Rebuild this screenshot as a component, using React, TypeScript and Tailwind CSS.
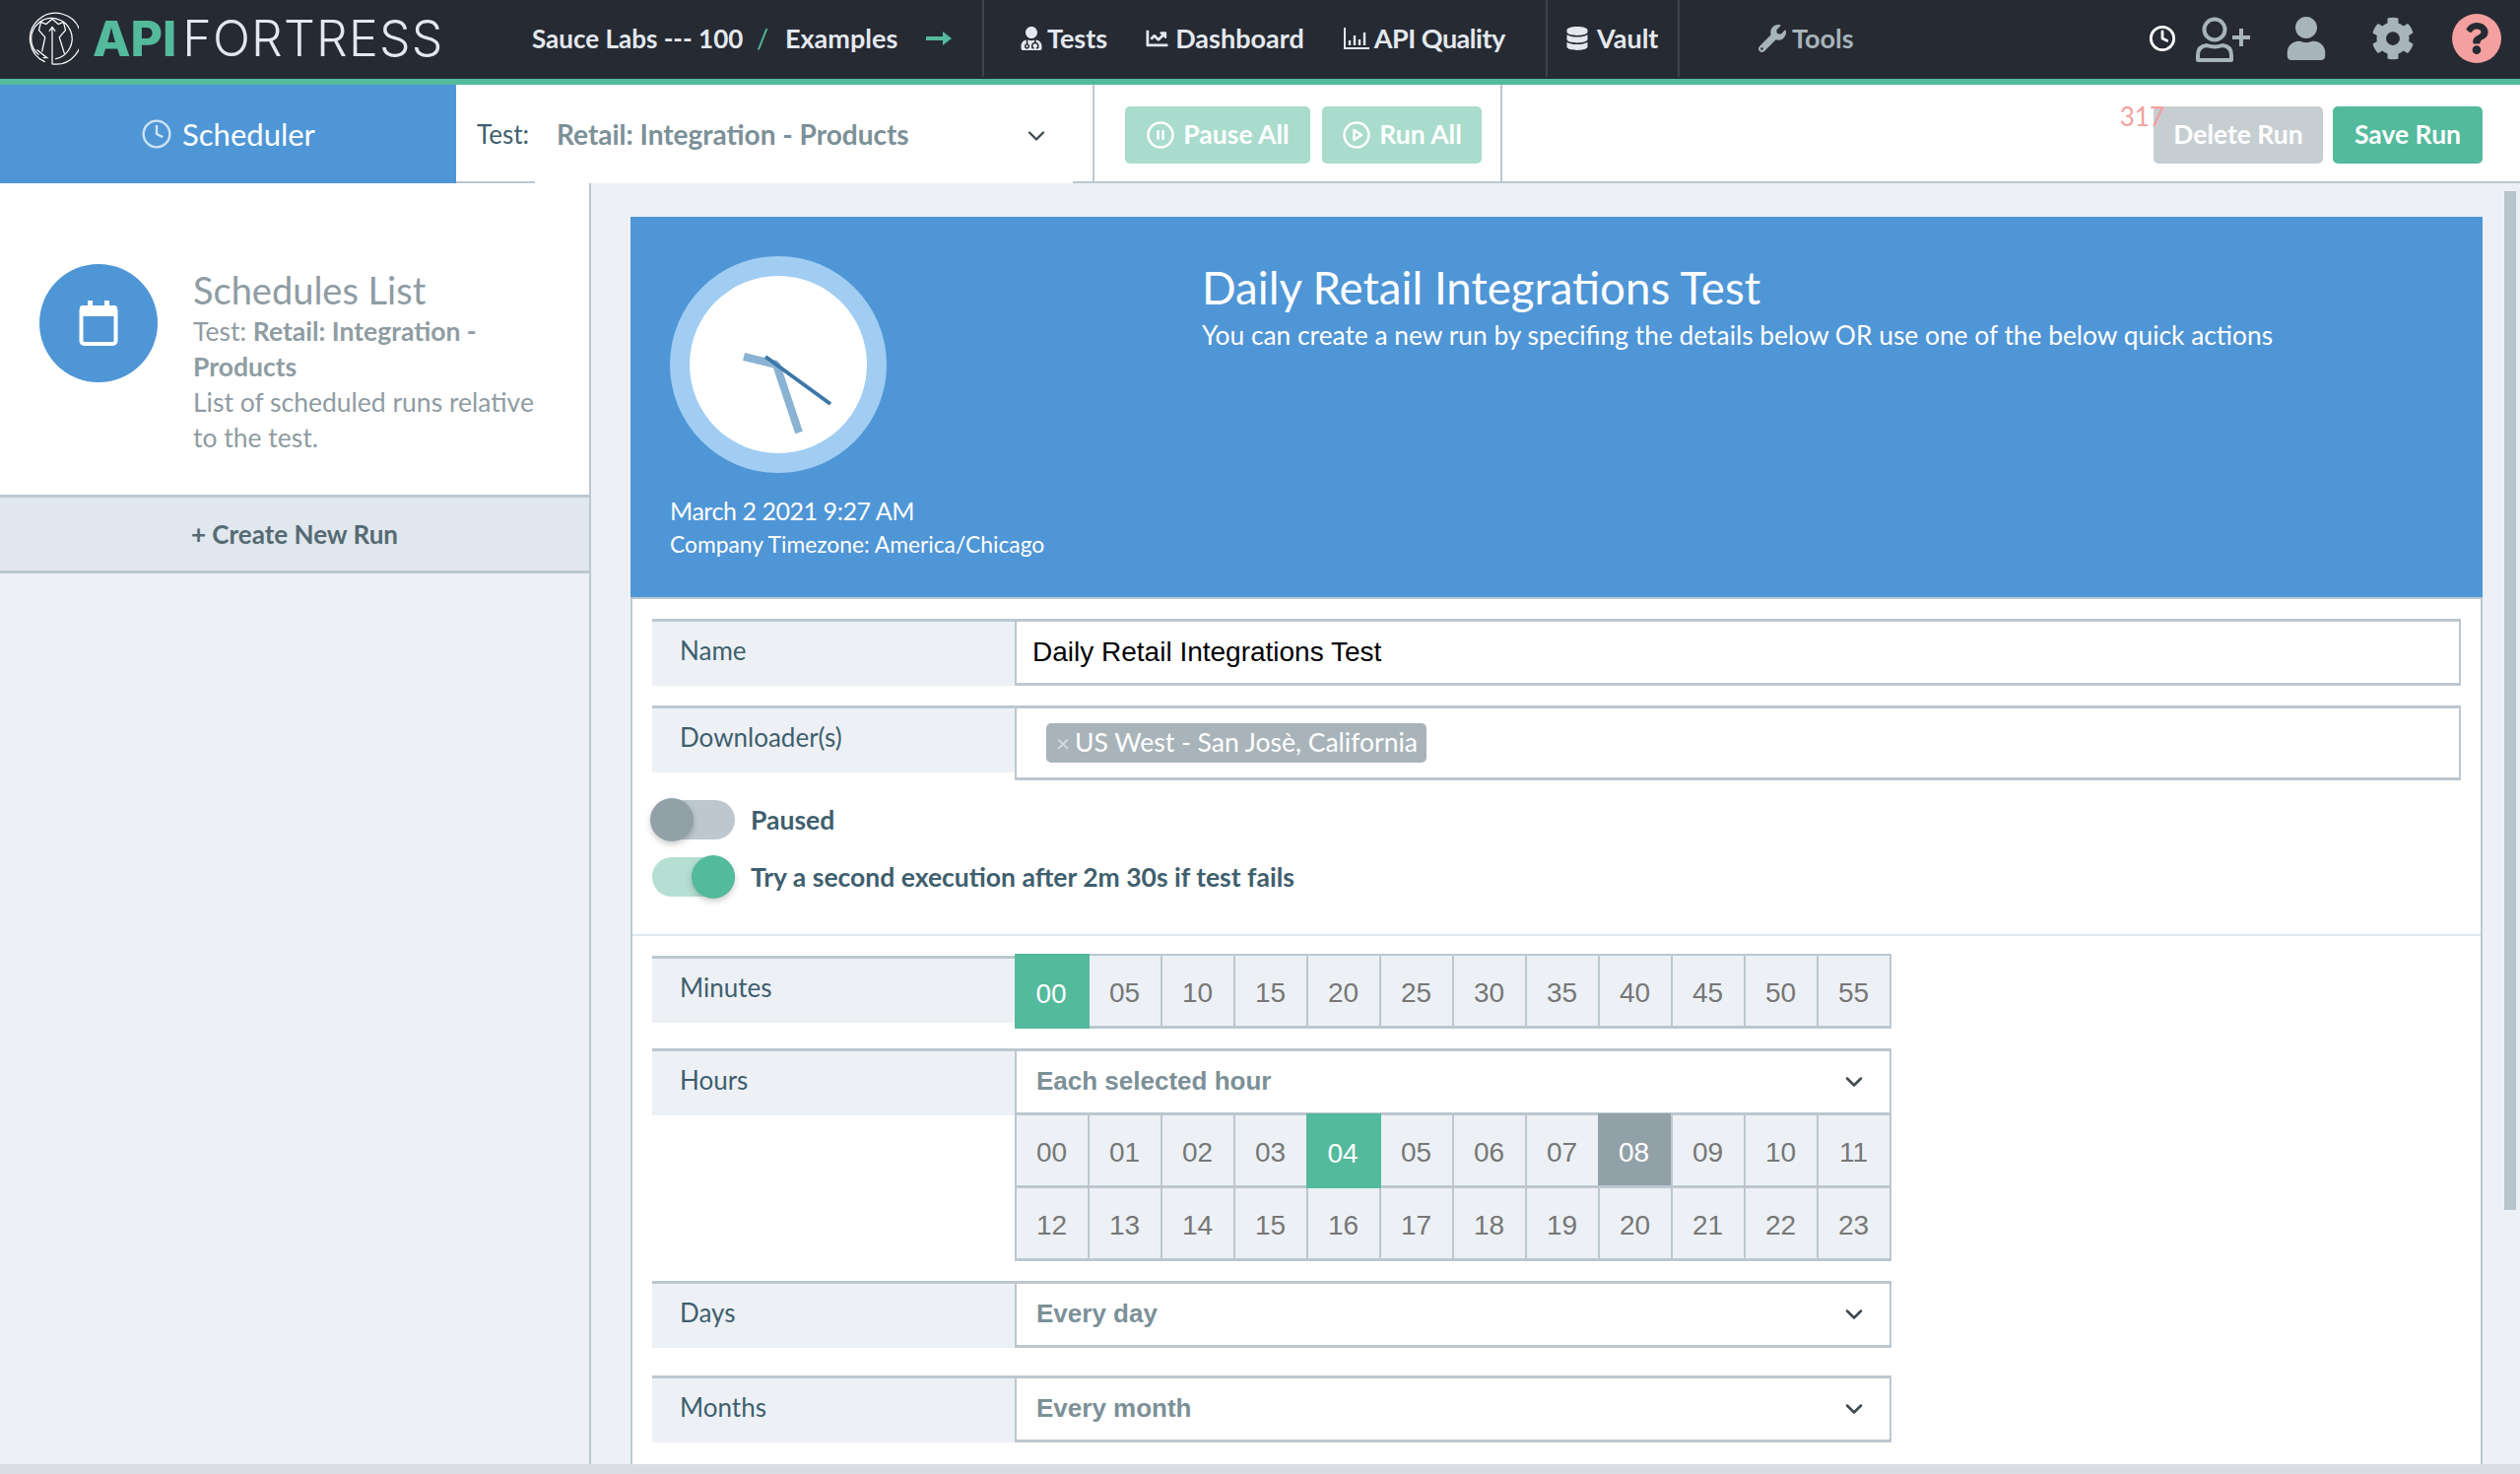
import { ChevronDown } from 'lucide-react';
import { FaChartLine, FaDatabase, FaUserMd, FaWrench, FaCog, FaQuestion, FaUser } from 'react-icons/fa';
import { FiClock, FiPauseCircle, FiPlayCircle } from 'react-icons/fi';

const SANS = 'font-[Lato,sans-serif]';

const minutes = ['00', '05', '10', '15', '20', '25', '30', '35', '40', '45', '50', '55'];
const hours = Array.from({ length: 24 }, (_, i) => String(i).padStart(2, '0'));

function Logo() {
  return (
    <svg viewBox="1 1 52 52" className="h-[54px] w-[54px] shrink-0 text-white" fill="none" stroke="currentColor" strokeWidth="1.2">
      <path d="M20 50 A25 25 0 1 1 27 52 L27 16" />
      <path d="M14 43 A20 20 0 1 1 30 47" />
      <path d="M24 20 L27 16 L30 20" />
      <path d="M17 40 L20 26 L14 19 L16 11 L21 13 L27 8 L33 13 L38 11 L40 19 L34 26 L39 42" />
      <path d="M12 38 L22 46 L18 46" />
    </svg>
  );
}

function NavLink({ icon, label, muted, gap = 'gap-[5px]', labelClass = '' }: { icon: React.ReactNode; label: string; muted?: boolean; gap?: string; labelClass?: string }) {
  return (
    <div className={`flex items-center text-[27px] font-bold ${gap} ${muted ? 'text-[#a7b4ba]' : 'text-[#e4e8ee]'}`}>
      {icon}
      <span className={labelClass}>{label}</span>
    </div>
  );
}

function Label({ children }: { children: React.ReactNode }) {
  return (
    <div className="flex h-[68px] w-[368px] shrink-0 items-start border-t-[3px] border-[#bcc7cf] bg-[#edf1f5] pl-7 pt-[14px] text-[26px] leading-[30px] text-[#3f5f6e]">
      {children}
    </div>
  );
}

function SelectBox({ value }: { value: string }) {
  return (
    <div className="flex h-[68px] items-center justify-between border-x-2 border-t-[3px] border-b-[3px] border-[#bcc7cf] bg-white pl-5 pr-[22px] font-['Liberation_Sans',sans-serif] text-[26px] font-bold text-[#7c9098]">
      <span className="-mt-[2px]">{value}</span>
      <ChevronDown className="h-7 w-7 text-[#3f4a50]" strokeWidth={2.2} />
    </div>
  );
}

function TimeCell({ value, tone }: { value: string; tone?: 'green' | 'gray' }) {
  if (tone === 'green') {
    return (
      <div className="relative -ml-[2px] -mt-[2px] flex h-[76px] items-center justify-center bg-[#53ba9c] pr-[2px] pt-[5px] text-white">
        {value}
      </div>
    );
  }
  const bg = tone === 'gray' ? 'relative -ml-[2px] -mt-[2px] pt-[7px] h-[76px] bg-[#92a1a8] text-white' : 'h-[74px] pt-[5px] bg-[#edf1f5] text-[#777]';
  return <div className={`flex items-center justify-center border-r-2 border-b-[3px] border-[#bcc7cf] pr-[1px] ${bg}`}>{value}</div>;
}

function Toggle({ on }: { on?: boolean }) {
  return (
    <div className={`relative h-10 w-[84px] shrink-0 rounded-full ${on ? 'bg-[#b5dfd2]' : 'bg-[#bcc7cf]'}`}>
      <div className={`absolute top-[-2px] h-11 w-11 rounded-full shadow-[0_3px_6px_rgba(0,0,0,0.2)] ${on ? 'right-0 bg-[#53ba9c]' : 'left-[-2px] bg-[#92a1a8]'}`} />
    </div>
  );
}

function ActionButton({ icon, label, className }: { icon?: React.ReactNode; label: string; className: string }) {
  return (
    <div className={`flex h-[58px] items-center justify-center gap-2 rounded-[5px] text-[26.5px] font-bold text-white ${className}`}>
      {icon}
      {label}
    </div>
  );
}

export default function App() {
  return (
    <div className={`flex h-[1496px] w-[2558px] flex-col overflow-hidden bg-[#edf1f5] ${SANS}`}>
      {/* top nav */}
      <header className="flex h-[86px] shrink-0 items-start border-b-[6px] border-[#53ba9c] bg-[#262a33]">
        <div className="flex h-[78px] w-[997px] items-center pl-[26px]">
          <Logo />
          <div className="ml-[14px] flex w-[355px] font-[Inter,sans-serif] text-[50px] leading-none">
            <span className="font-extrabold text-[#53ba9c]">API</span>
            <span className="ml-[6px] font-light tracking-[1.2px] text-[#e4e8ee]">FORTRESS</span>
          </div>
          <div className="ml-[91px] flex items-center text-[27px] font-bold text-[#e4e8ee]">
            <span className="w-[228px] text-[26px]">Sauce Labs --- 100</span>
            <span className="w-[29px] font-normal text-[#53ba9c]">/</span>
            <span className="w-[143px]">Examples</span>
            <svg viewBox="0 0 26 16" className="h-4 w-[26px] text-[#53ba9c]" fill="currentColor">
              <path d="M0 6h17V1l9 7-9 7V10H0z" />
            </svg>
          </div>
        </div>
        <div className="flex h-[78px] w-[572px] items-center gap-[38px] border-l-2 border-[#3d424b] pl-[37px]">
          <NavLink icon={<FaUserMd className="h-[24px] w-[22px]" />} label="Tests" />
          <NavLink gap="gap-[6px]" icon={<FaChartLine className="h-[22px] w-[25px]" />} label="Dashboard" />
          <NavLink
            gap="gap-[5px]"
            labelClass="tracking-[-0.5px]"
            icon={
              <svg viewBox="0 0 26 22" className="ml-[2px] h-[22px] w-[26px]" fill="none" stroke="currentColor">
                <path d="M1 0v21h25" strokeWidth="2" />
                <path d="M6 18v-5M11 18V8M16 18v-6M21 18V5" strokeWidth="2.4" />
              </svg>
            }
            label="API Quality"
          />
        </div>
        <div className="flex h-[78px] w-[136px] items-center border-x-2 border-[#3d424b] pl-[19px]">
          <NavLink gap="gap-[9px]" icon={<FaDatabase className="h-[24px] w-[22px]" />} label="Vault" />
        </div>
        <div className="ml-[80px] flex h-[78px] flex-1 items-center">
          <NavLink muted gap="gap-[6px]" icon={<FaWrench className="h-[28px] w-[28px]" />} label="Tools" />
        </div>
        <div className="flex h-[78px] items-center pr-[19px]">
          <FiClock className="h-7 w-7 text-white" strokeWidth={2.4} />
          <svg viewBox="0 0 56 46" className="ml-[20px] mt-[2px] h-[46px] w-[56px] text-[#a7b4ba]" fill="none" stroke="currentColor" strokeWidth="4">
            <circle cx="19" cy="13" r="10.5" />
            <path d="M2 44v-5q0-9 9-10q8 3 16 0q9 1 9 10v5z" strokeLinejoin="round" />
            <path d="M46 12v18M37 21h18" />
          </svg>
          <FaUser className="ml-[36px] h-[44px] w-[40px] text-[#a7b4ba]" />
          <FaCog className="ml-[46px] h-[44px] w-[44px] text-[#a7b4ba]" />
          <div className="ml-[38px] flex h-[50px] w-[50px] items-center justify-center rounded-full bg-[#f4a0a0]">
            <FaQuestion className="h-8 w-8 text-[#262a33]" />
          </div>
        </div>
      </header>

      {/* toolbar */}
      <div className="flex h-[100px] shrink-0 bg-white">
        <div className="flex w-[463px] items-center justify-center gap-[10px] bg-[#4f96d6] text-[31px] text-white">
          <FiClock className="h-8 w-8 text-[#cfe4f6]" strokeWidth={1.8} />
          Scheduler
        </div>
        <div className="relative flex w-[646px] items-center pl-[21px] text-[26px] text-[#3f5f6e]">
          <span className="w-[81px]">Test:</span>
          <span className="text-[28px] font-bold text-[#7c9098]">Retail: Integration - Products</span>
          <ChevronDown className="absolute left-[575px] top-[38px] h-7 w-7 text-[#3f4a50]" strokeWidth={2} />
          <div className="absolute bottom-0 left-0 h-[2px] w-20 bg-[#bcc7cf]" />
          <div className="absolute bottom-0 right-0 h-[2px] w-5 bg-[#bcc7cf]" />
        </div>
        <div className="flex w-[416px] gap-3 border-x-2 border-b-2 border-[#bcc7cf] pl-[31px] pt-[22px]">
          <ActionButton icon={<FiPauseCircle className="h-[30px] w-[30px]" />} label="Pause All" className="w-[188px] bg-[#a9dccd]" />
          <ActionButton icon={<FiPlayCircle className="h-[30px] w-[30px]" />} label="Run All" className="w-[162px] bg-[#a9dccd]" />
        </div>
        <div className="relative flex flex-1 justify-end gap-[10px] border-b-2 border-[#bcc7cf] pr-[38px] pt-[22px]">
          <ActionButton label="Delete Run" className="w-[172px] bg-[#c7ced2]" />
          <ActionButton label="Save Run" className="w-[152px] bg-[#53ba9c]" />
          <span className="absolute right-[361px] top-[12px] z-10 text-[26px] leading-[40px] text-[#f4a0a0]">317</span>
        </div>
      </div>

      <div className="flex min-h-0 flex-1">
        {/* sidebar */}
        <aside className="flex w-[600px] shrink-0 flex-col border-r-2 border-[#bcc7cf]">
          <div className="flex h-[316px] bg-white pl-10 pt-[82px]">
            <div className="flex h-[120px] w-[120px] shrink-0 items-center justify-center rounded-full bg-[#4f96d6]">
              <svg viewBox="0 0 40 46" className="h-[46px] w-10" fill="none">
                <path d="M9 0h5v8H9zM26 0h5v8h-5z" fill="#fff" />
                <path d="M4 5h32a3 3 0 0 1 3 3v8H1V8a3 3 0 0 1 3-3z" fill="#fff" />
                <rect x="2.5" y="7" width="35" height="37" rx="3" stroke="#fff" strokeWidth="4" />
              </svg>
            </div>
            <div className="ml-[36px] w-[360px] text-[26.5px] leading-9 text-[#8f9ca3]">
              <div className="mt-[3px] text-[38px] leading-[46px]">Schedules List</div>
              <div className="mt-[1px]">
                Test: <b>Retail: Integration - Products</b>
              </div>
              <div>List of scheduled runs relative to the test.</div>
            </div>
          </div>
          <div className="flex h-[80px] items-center justify-center border-y-[3px] border-[#bcc7cf] bg-[#e0e7ee] text-[26px] font-bold text-[#566a73]">
            + Create New Run
          </div>
        </aside>

        {/* main */}
        <main className="relative flex min-w-0 flex-1 flex-col pl-10 pr-[38px] pt-[34px]">
          <section className="flex h-[386px] shrink-0 bg-[#4f96d6] text-white">
            <div className="w-[580px] pl-10 pt-10">
              <svg viewBox="0 0 220 220" className="h-[220px] w-[220px]">
                <circle cx="110" cy="110" r="110" fill="#a1cdf3" />
                <circle cx="110" cy="110" r="90" fill="#fff" />
                <path d="M75 102 L108 110 L131 179" fill="none" stroke="#8ab3d3" strokeWidth="8" strokeLinejoin="bevel" />
                <path d="M97 102 L163 150" stroke="#3d77a8" strokeWidth="4" />
              </svg>
              <div className="mt-5 text-[25px] leading-[36px] tracking-[-0.45px]">March 2 2021 9:27 AM</div>
              <div className="text-[22.8px] leading-[32px]">Company Timezone: America/Chicago</div>
            </div>
            <div className="pt-[42px]">
              <div className="text-[45.6px] leading-[60px]">Daily Retail Integrations Test</div>
              <div className="mt-[1px] text-[26.35px] leading-[34px]">You can create a new run by specifing the details below OR use one of the below quick actions</div>
            </div>
          </section>

          <section className="min-h-0 flex-1 border-x-2 border-t-2 border-[#bcc7cf] bg-white">
            <div className="px-5 pt-5">
              <div className="flex">
                <Label>Name</Label>
                <div className="flex h-[68px] flex-1 items-center border-x-2 border-t-[3px] border-b-[3px] border-[#bcc7cf] pl-4 font-['Liberation_Sans',sans-serif] text-[28px] text-black">
                  Daily Retail Integrations Test
                </div>
              </div>
              <div className="mt-5 flex items-start">
                <Label>Downloader(s)</Label>
                <div className="flex h-[76px] flex-1 items-center border-x-2 border-t-[3px] border-b-[3px] border-[#bcc7cf] pl-[30px]">
                  <div className="flex h-10 w-[386px] items-center gap-[5px] rounded-[5px] bg-[#a8b4ba] pl-[10px] text-[26.5px] text-white">
                    <span className="text-[24px] text-[#d5dbde]">×</span>
                    US West - San Josè, California
                  </div>
                </div>
              </div>
              <div className="mt-5 flex h-10 items-center gap-4 text-[26.5px] font-bold text-[#3f5f6e]">
                <Toggle />
                <span className="mt-[2px]">Paused</span>
              </div>
              <div className="mt-[18px] flex h-10 items-center gap-4 text-[26.5px] font-bold text-[#3f5f6e]">
                <Toggle on />
                <span className="mt-[2px]">Try a second execution after 2m 30s if test fails</span>
              </div>
            </div>

            <div className="mt-[38px] border-t-2 border-[#e0e7ee] px-5 pt-5 font-['Liberation_Sans',sans-serif]">
              <div className={`flex w-[1258px] ${SANS}`}>
                <Label>Minutes</Label>
                <div className="-mt-[2px] grid flex-1 grid-cols-12 self-start border-l-2 border-t-2 border-[#bcc7cf] font-['Liberation_Sans',sans-serif] text-[28px]">
                  {minutes.map((m, i) => (
                    <TimeCell key={m} value={m} tone={i === 0 ? 'green' : undefined} />
                  ))}
                </div>
              </div>

              <div className={`mt-5 flex w-[1258px] ${SANS}`}>
                <Label>Hours</Label>
                <div className="flex-1">
                  <SelectBox value="Each selected hour" />
                  <div className="grid grid-cols-12 border-l-2 border-[#bcc7cf] font-['Liberation_Sans',sans-serif] text-[28px]">
                    {hours.map((h) => (
                      <TimeCell key={h} value={h} tone={h === '04' ? 'green' : h === '08' ? 'gray' : undefined} />
                    ))}
                  </div>
                </div>
              </div>

              <div className={`mt-5 flex w-[1258px] ${SANS}`}>
                <Label>Days</Label>
                <div className="flex-1">
                  <SelectBox value="Every day" />
                </div>
              </div>

              <div className={`mt-7 flex w-[1258px] ${SANS}`}>
                <Label>Months</Label>
                <div className="flex-1">
                  <SelectBox value="Every month" />
                </div>
              </div>
            </div>
          </section>

          {/* page scrollbar */}
          <div className="absolute right-1 top-2 h-[1034px] w-3 bg-[#b7c4cc]" />
        </main>
      </div>
      <div className="h-[10px] shrink-0 bg-[#d9dde2]" />
    </div>
  );
}
